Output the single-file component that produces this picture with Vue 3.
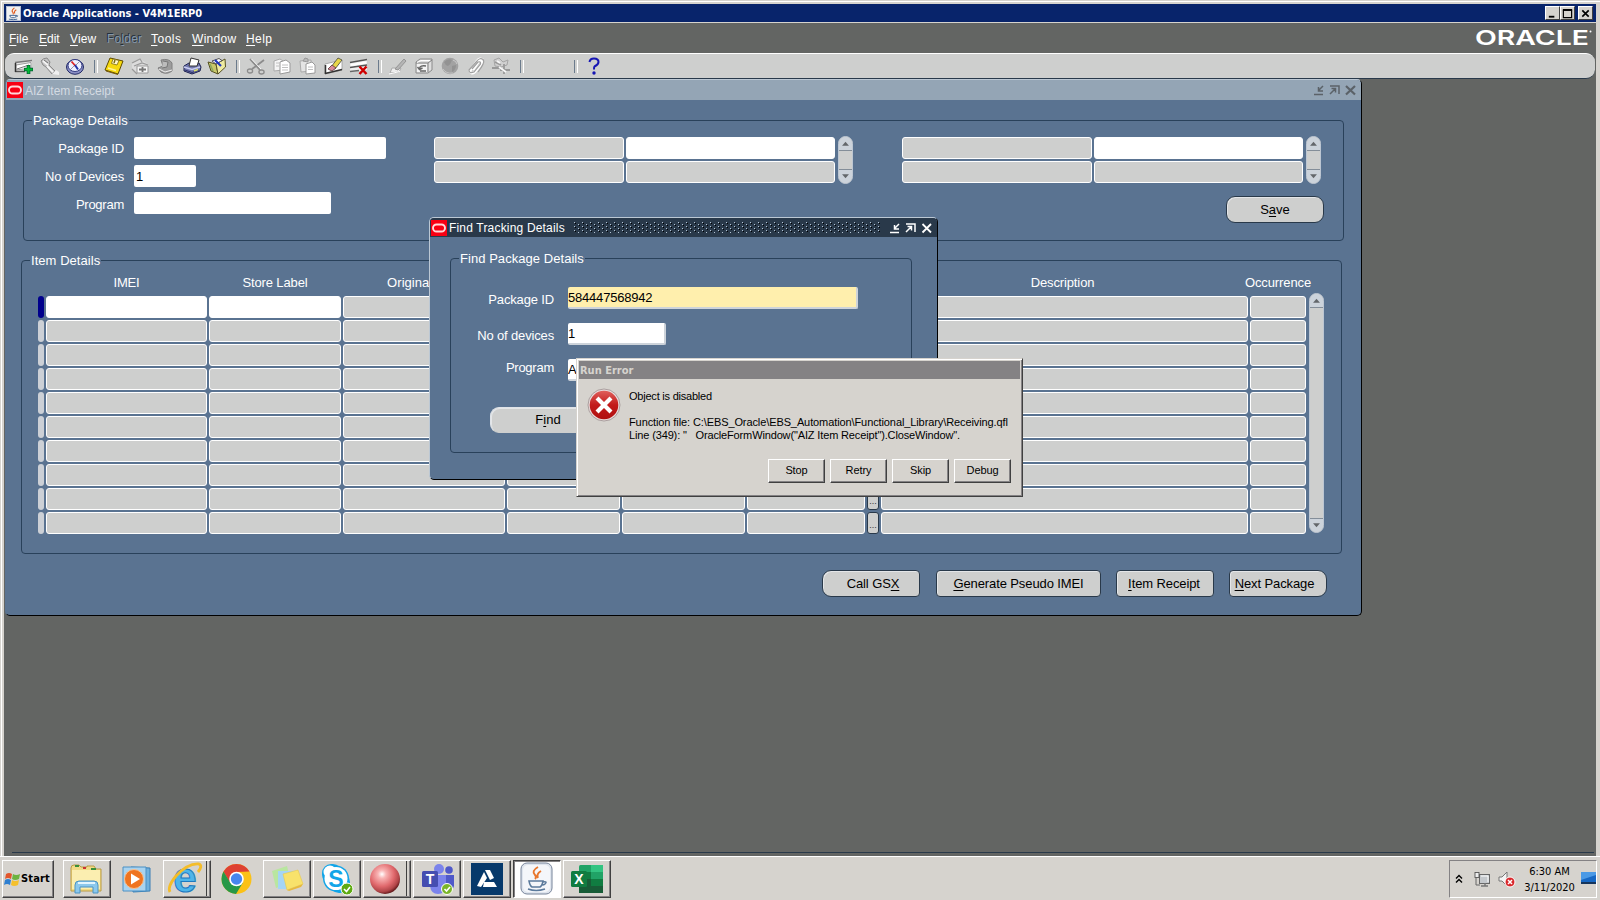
<script setup>
const menus = [
  { id: 'file', pre: '', key: 'F', post: 'ile' },
  { id: 'edit', pre: '', key: 'E', post: 'dit' },
  { id: 'view', pre: '', key: 'V', post: 'iew' },
  { id: 'folder', pre: 'Fo', key: 'l', post: 'der', off: true },
  { id: 'tools', pre: '', key: 'T', post: 'ools' },
  { id: 'window', pre: '', key: 'W', post: 'indow' },
  { id: 'help', pre: '', key: 'H', post: 'elp' }
]

const tools = [
  { id: 'new', svg: '<path d="M1 6 L18 3 V12 L1 14Z" fill="#e6e6e6"/><path d="M1 5.500L18 3.500" stroke="#777" stroke-width="1.600"/><path d="M2 8L17 5.500V11L2 13Z" fill="#fff" stroke="#888" stroke-width=".8"/><path d="M1 14.500H11" stroke="#555" stroke-width="1.400"/><path d="M1.500 6V15" stroke="#333" stroke-width="1.500"/><path d="M3 12L15 8" stroke="#777"/><path d="M14.500 8V17M10 12.500H19" stroke="#053" stroke-width="3.600"/><path d="M14.500 8.500V16.500M10.500 12.500H18.500" stroke="#0b3" stroke-width="2.200"/>' },
  { id: 'find', svg: '<path d="M1 4Q3 1 7 1L10 5L9 8L15 14L12 17L6 10L3 8Z" fill="#c4c4c4" stroke="#8a8a8a"/><path d="M3 4L8 8M7 9L13 15" stroke="#f4f4f4" stroke-width="1.800"/><path d="M4 3L8 6" stroke="#777"/><path d="M12 17L16 13L19 15V18Z" fill="#f0f0f0"/>' },
  { id: 'navigator', svg: '<ellipse cx="10" cy="10" rx="8.500" ry="7.300" fill="#8a8fc4" stroke="#222a66"/><ellipse cx="10" cy="8.500" rx="7" ry="6" fill="#eef0ff" stroke="#333b80"/><path d="M6.500 4.500L10.500 9" stroke="#d22" stroke-width="1.800"/><path d="M10 8L13 12.500" stroke="#2233aa" stroke-width="2"/><path d="M14 5L11 8M6 12L9 9" stroke="#99a" />' },
  { sep: true, id: 's1' },
  { id: 'save', svg: '<path d="M6 1L19 4L14 17L1 13Z" fill="#f6d90f" stroke="#5e4b00"/><path d="M9 2L15 3.500L13 8L7.500 6.500Z" fill="#fff9cc" stroke="#7c6a10" stroke-width=".8"/><path d="M11 3L10 6" stroke="#7c6a10" stroke-width="1.500"/><path d="M4 11L12 13.500" stroke="#fff29a" stroke-width="1.500"/><path d="M2 14L14 17.500" stroke="#7a5b00"/>' },
  { id: 'next', svg: '<path d="M2 6L10 2L18 7L17 15L7 17L2 12Z" fill="#dcdcdc"/><path d="M2 6L10 2L12 5M4 9L12 6L18 8M2 12L7 17" stroke="#999" stroke-width="1.200"/><path d="M7 9H18V16H7Z" fill="#f6f6f6" stroke="#999"/><path d="M9 12.500H16M12.500 10V15" stroke="#777" stroke-width="1.800"/>' },
  { id: 'switch', svg: '<path d="M5 3Q13 1 16 6V14Q11 18 5 15L2 11L7 9Z" fill="#9c9c9c" stroke="#808080"/><path d="M7 4L12 5L11 10L6 11" fill="#bcbcbc" stroke="#777"/><path d="M3 12L9 15L16 13" stroke="#efefef"/>' },
  { id: 'print', svg: '<path d="M2 9L7 6H17L19 10L18 14L10 17L2 14Z" fill="#7278ae" stroke="#1d2250"/><path d="M7 9L9 1L17 3L15 9Z" fill="#fff" stroke="#333"/><path d="M2 10L10 12.500L18 10" stroke="#c9cdf0" stroke-width="1.600"/><path d="M3 13L10 15.500L17 13" stroke="#2a2f6a"/><path d="M12 14L16 12.500" stroke="#dfe26a" stroke-width="1.500"/>' },
  { id: 'close', svg: '<path d="M1 5L9 7L11 17L4 14Z" fill="#c9c86a" stroke="#555022"/><path d="M9 7L18 2L18.500 10L11 17Z" fill="#eeeaa0" stroke="#555022"/><path d="M5 4L12 1.500L15 3.500L9 7Z" fill="#fff" stroke="#555"/><path d="M8 3L14 9" stroke="#2038c0" stroke-width="2.200"/><path d="M3 7L6 14" stroke="#8aa860" stroke-width="1.500"/>' },
  { sep: true, id: 's2' },
  { id: 'cut', svg: '<path d="M4 2L14 13M18 3L6 12" stroke="#8c8c8c" stroke-width="1.800"/><path d="M5.500 2L15 12" stroke="#f4f4f4"/><ellipse cx="4" cy="14" rx="2.600" ry="2" stroke="#8c8c8c" stroke-width="1.300"/><ellipse cx="15.500" cy="15" rx="2.600" ry="2" stroke="#8c8c8c" stroke-width="1.300"/>' },
  { id: 'copy', svg: '<path d="M2 4L8 2L11 4V13L2 14Z" fill="#f5f5f5" stroke="#aaa"/><path d="M8 5L14 3L18 6V15L8 17Z" fill="#fff" stroke="#999"/><path d="M10 8H16M10 10.500H16M10 13H16M4 6H7M4 9H7" stroke="#c0c0c0"/>' },
  { id: 'paste', svg: '<path d="M2 4L13 3V14L3 15Z" fill="#e4e4e4" stroke="#aaa"/><path d="M5 4L7 1L10 2V5Z" fill="#bbb" stroke="#999"/><path d="M8 7L14 5L17 8V16L8 17Z" fill="#fff" stroke="#999"/><path d="M10 10H15M10 12.500H15" stroke="#c0c0c0"/>' },
  { id: 'clear', svg: '<path d="M1 7L18 3V13L1 17Z" fill="#fff" stroke="#999" stroke-width=".8"/><path d="M1 16.500L18 12.500" stroke="#333" stroke-width="1.500"/><path d="M1.500 8V17" stroke="#333" stroke-width="1.500"/><path d="M7 10L14 1L18 3L11 12Z" fill="#e8d648" stroke="#554" stroke-width=".9"/><path d="M4 12L8 8L12 11L8 14Z" fill="#d98a9a" stroke="#644" stroke-width=".9"/>' },
  { id: 'delete', svg: '<path d="M1 5L18 2V13L1 15Z" fill="#eee"/><path d="M1 5.500L18 2.500M1 10.500L18 8" stroke="#555" stroke-width="1.700"/><path d="M2 8L17 5.500" stroke="#fff" stroke-width="2"/><path d="M1 14.500L10 13.500" stroke="#666" stroke-width="1.500"/><path d="M10.500 9.500L17.500 17M17.500 9.500L10.500 17" stroke="#d00000" stroke-width="2.500"/>' },
  { sep: true, id: 's3' },
  { id: 'edit', svg: '<path d="M2 16L4 11H13L11 15Z" fill="#eee" stroke="#aaa"/><path d="M7 12L16 2L18 4L10 13Z" fill="#b5b5b5" stroke="#959595"/><path d="M1 17L12 14.500" stroke="#fff"/>' },
  { id: 'zoom', svg: '<path d="M2 5L6 2H18V13L14 16H2Z" fill="#dedede" stroke="#8a8a8a"/><path d="M3 7H13V15H3Z" fill="#f3f3f3"/><path d="M2 6H14V15M14 6L18 3" stroke="#808080"/><path d="M3 5.500L7 3.500H16" stroke="#fff"/><path d="M12 9Q6 8 5.500 11.500M3.500 10L5.500 12.500L8.500 11M6 14H12" stroke="#666" stroke-width="1.400"/>' },
  { id: 'translate', svg: '<circle cx="10" cy="9" r="8.300" fill="#a2a2a2"/><path d="M4 5Q8 1 12 3Q11 7 8 9Q5 8 4 5ZM12 9L16 8Q16 13 12 15Z" fill="#929292"/><path d="M3 12Q6 17 13 16" stroke="#c4c4c4"/><path d="M13 3Q16 4 17 7" stroke="#ccc"/>' },
  { id: 'attach', svg: '<path d="M7 13L13 4Q16 3 16 6L9 15Q5 18 4 14L11 4Q14 0 17 3" stroke="#fff" stroke-width="2.600"/><path d="M6 12L12 5Q15 4 14.500 7L8 15Q3 17 3 13L11 4Q14 0 17.500 3Q19 6 12 15" stroke="#a0a0a0" stroke-width="1.200"/>' },
  { id: 'folder', svg: '<path d="M3 3L8 1L12 5L17 3L16 8L10 10L4 9Z" fill="#d0d0d0" stroke="#a5a5a5"/><path d="M1 11H10M13 7V17M9 13H19M4 5L10 8" stroke="#999" stroke-width="1.800"/><path d="M6 4L9 6M8 10L15 15" stroke="#f7f7f7" stroke-width="1.800"/>' },
  { sep: true, id: 's4' },
  { gap: true, id: 'g1' },
  { sep: true, id: 's5' },
  { id: 'help', svg: '<path d="M5.500 5Q6 1.500 10 1.500Q14.500 1.500 14.500 5Q14.500 7.500 10.500 9.500Q10 10 10 12.500" fill="none" stroke="#1616b4" stroke-width="2"/><circle cx="10" cy="16" r="1.700" fill="#1616b4"/>' }
]

const cols = ['imei', 'store', 'orig', 'c4', 'c5', 'c6', 'lov', 'desc', 'occ']
const heads = { imei: 'IMEI', store: 'Store Label', orig: 'Original IMEI', desc: 'Description', occ: 'Occurrence' }

const tasks = [
  { id: 'explorer', box: true, svg: '<path d="M4 7Q4 4 7 4H12L14 6H20V5H27L29 8H34V30H4Z" fill="#f2db86" stroke="#b99b45"/><path d="M5 9H33V28H5Z" fill="#fbeeb0"/><path d="M8 5H12M24 8H29" stroke="#3a8f3a" stroke-width="2"/><path d="M16 7H19" stroke="#c33" stroke-width="2"/><path d="M8 32V24Q8 20 12 20H27Q31 20 31 24V32H26V26H13V32Z" fill="#8cc8ec" stroke="#4a93c4"/><path d="M11 22H28" stroke="#e2f5ff" stroke-width="2"/>' },
  { id: 'media', svg: '<path d="M14 6L33 7V30L16 31Z" fill="#6fb0dd" stroke="#3b7fb4"/><path d="M6 6H29V30H6Z" fill="#a9d3ef" stroke="#4b90c4"/><circle cx="17" cy="18" r="9.500" fill="#ef7420" stroke="#f9c08f"/><path d="M14 12.500L23 18L14 23.500Z" fill="#fff"/>' },
  { id: 'ie', box: true, stack: true, svg: '<text x="19" y="31" text-anchor="middle" font-family="Liberation Sans, sans-serif" font-weight="700" font-size="42" fill="#4db5ea" stroke="#1d79c0" stroke-width="1">e</text><path d="M4 31Q1 26 10 15Q22 2 33 3Q37 5 32 11" fill="none" stroke="#f4bd2a" stroke-width="2.800"/>' },
  { id: 'chrome', svg: '<circle cx="19.500" cy="18" r="15" fill="#fbc116"/><path d="M6.500 10.500A15 15 0 0 1 32.500 10.500L19.500 11L13 22Z" fill="#de4132"/><path d="M6.500 10.500A15 15 0 0 0 19 33L26 21.500L13.300 21.700Z" fill="#279847"/><circle cx="19.500" cy="18" r="7.300" fill="#fff"/><circle cx="19.500" cy="18" r="5.700" fill="#4786ee"/>' },
  { id: 'notes', box: true, svg: '<path d="M5 10L20 5L24 22L9 27Z" fill="#b9e6a0"/><path d="M11 10H27V28H11Z" fill="#a5d5f5"/><path d="M16 13L31 9L36 23L20 29Z" fill="#f8e26b" stroke="#e8c94c" stroke-width=".6"/><path d="M20 29L36 23L34 26L22 30Z" fill="#e8b93c"/>' },
  { id: 'skype', box: true, svg: '<rect x="5" y="3" width="20" height="20" rx="9" fill="#12a5e8"/><rect x="12" y="11" width="21" height="21" rx="10" fill="#12a5e8"/><circle cx="19" cy="17.500" r="13" fill="#12a5e8"/><circle cx="19" cy="17.500" r="11.500" fill="#fff"/><circle cx="13" cy="11" r="6.500" fill="#fff"/><text x="19" y="26" text-anchor="middle" font-family="Liberation Sans, sans-serif" font-weight="700" font-size="23" fill="#12a5e8">S</text><circle cx="30" cy="28" r="6" fill="#5fab12" stroke="#fff"/><path d="M27 28L29.500 30.500L33 26" fill="none" stroke="#fff" stroke-width="1.600"/>' },
  { id: 'ball', box: true, stack: true, svg: '<defs><radialGradient id="ballfill" cx=".4" cy=".34" r=".68"><stop offset="0" stop-color="#fff"/><stop offset=".2" stop-color="#f9b4b4"/><stop offset=".6" stop-color="#e0686c"/><stop offset=".85" stop-color="#b04548"/><stop offset="1" stop-color="#5d1517"/></radialGradient></defs><circle cx="19" cy="18" r="15" fill="url(#ballfill)"/>' },
  { id: 'teams', box: true, svg: '<circle cx="22" cy="8" r="5" fill="#7b83eb"/><circle cx="32" cy="9" r="3.800" fill="#5059c9"/><path d="M27 14H37V25Q36 30 30 30H27Z" fill="#5059c9"/><path d="M13 14H29V25Q28 33 21 33Q14 33 13 25Z" fill="#7b83eb"/><rect x="5" y="10" width="16" height="16" rx="1.500" fill="#454eb0"/><text x="13" y="23" text-anchor="middle" font-family="Liberation Sans, sans-serif" font-weight="700" font-size="14" fill="#fff">T</text><circle cx="30" cy="28" r="5.500" fill="#7ab52a" stroke="#fff"/><path d="M27.500 28L29.500 30L33 26" fill="none" stroke="#fff" stroke-width="1.600"/>' },
  { id: 'drive', box: true, svg: '<rect x="4" y="2" width="32" height="32" fill="#06396b"/><path d="M18 9H23L27 17L23 19Z" fill="#fff"/><path d="M17 11L20 17L14 26L10 25Z" fill="#fff"/><path d="M17 21H27L30 26H16Z" fill="#fff"/>' },
  { id: 'java', box: true, active: true, svg: '<rect x="4" y="2" width="31" height="31" rx="6" fill="#dfe5ee" stroke="#77849a"/><rect x="6" y="4" width="27" height="27" rx="5" fill="#f4f6fa"/><path d="M21 6Q14 10 18 14Q20 16 18 18M24 10Q19 13 21 17" fill="none" stroke="#e8762c" stroke-width="1.900"/><path d="M12 20H26Q25 25 23 26H15Q13 25 12 20ZM26 21Q31 20 28 23Q27 24 25 24M11 28Q19 31 28 28" fill="none" stroke="#5b7a9c" stroke-width="1.500"/>' },
  { id: 'excel', box: true, svg: '<rect x="12" y="4" width="24" height="28" rx="1.500" fill="#21a366"/><path d="M24 4H36V11H24Z" fill="#33c481"/><path d="M12 11H24V18H12Z" fill="#107c41"/><path d="M24 18H36V25H24Z" fill="#107c41"/><path d="M12 18H24V32H12ZM12 25H36V32H12Z" fill="#185c37"/><rect x="4" y="10" width="16" height="16" rx="1.500" fill="#107c41"/><text x="12" y="23" text-anchor="middle" font-family="Liberation Sans, sans-serif" font-weight="700" font-size="14" fill="#fff">X</text>' }
]
</script>

<template>
  <div class="screen">
    <header class="titlebar">
      <svg class="java" viewBox="0 0 16 16"><rect x=".5" y=".5" width="15" height="15" fill="#f1f1f1" stroke="#b9c3d6" /><path d="M9 2Q5 5 7.500 7Q8 8 7.500 9M11 4Q8 6 9.500 8" fill="none" stroke="#e05a1c" stroke-width="1.200" /><path d="M4 10H11Q11 12 9 12.500H6Q4 12 4 10ZM11 10Q14 10 11 12M3 14Q8 15.200 12 14" fill="none" stroke="#3d6290" /></svg>
      <span class="app-name">Oracle Applications - V4M1ERP0</span>
      <div class="controls">
        <button><svg viewBox="0 0 14 12"><path d="M3 9.500H9" stroke="#000" stroke-width="2" /></svg></button>
        <button><svg viewBox="0 0 14 12"><path d="M2.500 2V10.500H11.500V2M2 2H12" fill="none" stroke="#000" stroke-width="1.300" /><path d="M2 2.200H12" stroke="#000" stroke-width="2" /></svg></button>
        <button class="x"><svg viewBox="0 0 14 12"><path d="M3.500 2.500L10.500 9.500M10.500 2.500L3.500 9.500" stroke="#000" stroke-width="1.800" /></svg></button>
      </div>
    </header>

    <nav class="menubar">
      <span v-for="m in menus" :key="m.id" class="menu" :class="[m.id, { off: m.off }]">{{ m.pre }}<u>{{ m.key }}</u>{{ m.post }}</span>
      <svg class="brand" width="118" height="26" viewBox="0 0 118 26"><text x="0" y="20" textLength="114" lengthAdjust="spacingAndGlyphs" font-family="Inter, sans-serif" font-weight="600" font-size="20.500" fill="#fff">ORACLE</text><circle cx="115.500" cy="6.500" r="1" fill="#fff" /></svg>
    </nav>

    <div class="toolbar">
      <template v-for="t in tools" :key="t.id">
        <i v-if="t.sep" class="sep"></i>
        <i v-else-if="t.gap" class="tgap"></i>
        <span v-else class="tool"><svg width="20" height="18" viewBox="0 0 20 18" fill="none" v-html="t.svg"></svg></span>
      </template>
    </div>

    <section class="win main">
      <div class="wtitle">
        <svg class="o" viewBox="0 0 16 16"><rect width="16" height="16" fill="#f80012" /><rect x="2" y="4.500" width="12" height="7" rx="3.500" fill="none" stroke="#ffd9d9" stroke-width="1.900" /></svg>
        <span class="cap">AIZ Item Receipt</span>
        <svg class="wctl" width="46" height="14" viewBox="0 0 46 14" fill="none" stroke="#5b6268" stroke-width="1.500"><path d="M1 11.500H10M10 3L6 7M5.500 4V8H10" /><path d="M17 3H26V11M17 11L22 6M18.500 5.500H22.500V9.500" /><path d="M33 3L42 11.500M42 3L33 11.500" stroke-width="2.200" /></svg>
      </div>

      <fieldset class="package">
        <legend><span>Package Details</span></legend>
        <div class="pk-row">
          <div class="pk-form">
            <label>Package ID</label><div class="inp w-id"></div>
            <label>No of Devices</label><div class="inp w-no">1</div>
            <label class="pr">Program</label><div class="inp w-pr"></div>
          </div>
          <div v-for="n in 2" :key="n" class="pk-block">
            <div class="pairs"><b></b><b class="on"></b><b></b><b></b></div>
            <div class="scroll small">
              <svg viewBox="0 0 15 14"><path d="M3.500 9.500H11.500L7.500 5Z" fill="#63676b" /></svg>
              <svg viewBox="0 0 15 14"><path d="M3.500 4.500H11.500L7.500 9Z" fill="#63676b" /></svg>
            </div>
          </div>
        </div>
        <button class="btn save">S<u>a</u>ve</button>
      </fieldset>

      <fieldset class="items">
        <legend><span>Item Details</span></legend>
        <div class="grid heads">
          <span></span>
          <span v-for="k in cols" :key="k" :class="k">{{ heads[k] }}</span>
        </div>
        <div class="body">
          <div class="rows">
            <div v-for="r in 10" :key="r" class="grid row">
              <i class="mark" :class="{ cur: r === 1 }"></i>
              <div v-for="k in cols" :key="k" :class="['cell', k, { on: r === 1 && (k === 'imei' || k === 'store') }]">{{ k === 'lov' && r > 8 ? '...' : '' }}</div>
            </div>
          </div>
          <div class="scroll tall">
            <svg viewBox="0 0 15 14"><path d="M3.500 9.500H11.500L7.500 5Z" fill="#63676b" /></svg>
            <svg viewBox="0 0 15 14"><path d="M3.500 4.500H11.500L7.500 9Z" fill="#63676b" /></svg>
          </div>
        </div>
      </fieldset>

      <div class="actions">
        <button class="btn gsx">Call GS<u>X</u></button>
        <button class="btn gen"><u>G</u>enerate Pseudo IMEI</button>
        <button class="btn rec"><u>I</u>tem Receipt</button>
        <button class="btn nxt"><u>N</u>ext Package</button>
      </div>
    </section>

    <section class="win find">
      <div class="wtitle dark">
        <svg class="o" viewBox="0 0 16 16"><rect width="16" height="16" fill="#f80012" /><rect x="2" y="4.500" width="12" height="7" rx="3.500" fill="none" stroke="#ffd9d9" stroke-width="1.900" /></svg>
        <span>Find Tracking Details</span>
        <svg class="hatch" width="308" height="11"><defs><pattern id="hatch" width="8" height="4" patternUnits="userSpaceOnUse"><rect width="1" height="1" fill="#b4c4d4" /><rect x="1" y="1" width="1" height="1" fill="#000" /><rect x="4" y="2" width="1" height="1" fill="#b4c4d4" /><rect x="5" y="3" width="1" height="1" fill="#000" /></pattern></defs><rect width="308" height="11" fill="url(#hatch)" /></svg>
        <svg class="wctl" width="46" height="14" viewBox="0 0 46 14" fill="none" stroke="#fff" stroke-width="1.500"><path d="M1 11.500H10M10 3L6 7M5.500 4V8H10" /><path d="M17 3H26V11M17 11L22 6M18.500 5.500H22.500V9.500" /><path d="M33.500 3L42 11.500M42 3L33.500 11.500" stroke-width="1.800" /></svg>
      </div>
      <fieldset class="findset">
        <legend><span>Find Package Details</span></legend>
        <div class="find-form">
          <label>Package ID</label><div class="inp f-id">584447568942</div>
          <label>No of devices</label><div class="inp f-no">1</div>
          <label class="pr">Program</label><div class="inp f-pr">A</div>
        </div>
        <button class="btn findbtn">F<u>i</u>nd</button>
      </fieldset>
    </section>

    <section class="dialog">
      <div class="dtitle">Run Error</div>
      <div class="dbody">
        <svg class="err" width="34" height="34" viewBox="0 0 34 34"><defs><linearGradient id="red" x1="0" y1="0" x2="0" y2="1"><stop offset="0" stop-color="#e0605c" /><stop offset=".5" stop-color="#c21a1a" /><stop offset="1" stop-color="#b01010" /></linearGradient></defs><circle cx="17" cy="17" r="16" fill="#e8dcdc" stroke="#9c8f8f" stroke-width=".8" /><circle cx="17" cy="17" r="14.300" fill="url(#red)" /><path d="M11.500 11.500L22.500 22.500M22.500 11.500L11.500 22.500" stroke="#fff" stroke-width="4.200" stroke-linecap="square" /></svg>
        <div class="dtext">
          <p class="l1">Object is disabled</p>
          <p class="l2">Function file: C:\EBS_Oracle\EBS_Automation\Functional_Library\Receiving.qfl</p>
          <p class="l3">Line (349): "&nbsp;&nbsp; OracleFormWindow("AIZ Item Receipt").CloseWindow".</p>
        </div>
      </div>
      <div class="dbtns">
        <button>Stop</button><button>Retry</button><button>Skip</button><button>Debug</button>
      </div>
    </section>

    <div class="spacer"></div>
    <div class="statusline"></div>
    <footer class="taskbar">
      <button class="start"><svg width="17" height="17" viewBox="0 0 17 17"><path d="M2 3Q5 1 8 3L7 8Q4 6 1 8Z" fill="#e2552b" /><path d="M9 3Q12 5 16 3L15 8Q11 10 8 8Z" fill="#6cb33f" /><path d="M1 9Q4 7 7 9L6 14Q3 12 0 14Z" fill="#2f7fd0" /><path d="M8 9Q11 11 15 9L14 14Q10 16 7 14Z" fill="#f5c02c" /></svg>Start</button>
      <div class="tasks">
        <div v-for="t in tasks" :key="t.id" class="task" :class="{ box: t.box, stack: t.stack, active: t.active }"><svg width="40" height="36" viewBox="0 0 40 36" v-html="t.svg"></svg></div>
      </div>
      <div class="tray">
        <svg width="8" height="10" viewBox="0 0 8 10" fill="none" stroke="#000" stroke-width="1.400"><path d="M1 4.500L4 1.500L7 4.500M1 8.500L4 5.500L7 8.500" /></svg>
        <svg class="net" width="18" height="17" viewBox="0 0 18 17"><rect x="5.500" y="3.500" width="10" height="9" fill="#c4c8cc" stroke="#666" /><path d="M7 15H14M11 12V15" stroke="#777" stroke-width="1.500" /><path d="M2 5.500V14H6" stroke="#666" fill="none" /><rect x="1" y="1.500" width="4" height="5" fill="#eee" stroke="#555" stroke-width=".9" /><path d="M7 5H14V11" stroke="#fff" fill="none" /></svg>
        <svg class="vol" width="18" height="17" viewBox="0 0 18 17"><path d="M1 6H4L9 1V15L4 10H1Z" fill="#f4f4f4" stroke="#777" /><circle cx="12" cy="11" r="5" fill="#d9282c" stroke="#fff" /><path d="M10 9L14 13M14 9L10 13" stroke="#fff" stroke-width="1.500" /></svg>
        <div class="clock"><span>6:30 AM</span><span>3/11/2020</span></div>
        <svg class="desk" width="15" height="14" viewBox="0 0 15 14"><rect width="15" height="11" fill="#1768c4" /><path d="M0 0H15V3L0 8Z" fill="#4b9ae6" /><rect x="0" y="10" width="15" height="2" fill="#16355c" /></svg>
      </div>
    </footer>
  </div>
</template>

<style>
html, body { margin: 0; overflow: hidden; }
</style>

<style scoped>
* { box-sizing: border-box; }
.screen {
  position: relative; width: 1600px; height: 900px; display: flex; flex-direction: column;
  background: #636563; padding: 4px 4px 0; overflow: hidden;
  box-shadow: inset 1px 1px 0 #d6d3ce, inset 2px 2px 0 #fff, inset 4px 4px 0 #d6d3ce, inset -4px 0 0 #d6d3ce;
  font: 13px/16px "Liberation Sans", Arial, sans-serif; color: #fff;
}
svg { display: block; flex: none; overflow: visible; }
button { font: inherit; color: #000; margin: 0; padding: 0; letter-spacing: inherit; }
u { text-decoration: underline; text-underline-offset: 2px; text-decoration-thickness: 1px; text-decoration-skip-ink: none; }

.titlebar { height: 19px; flex: none; background: #08246b; border-bottom: 1px solid #d6d3ce; display: flex; align-items: center; padding: 0 3px 0 2px; }
.java { width: 15px; height: 15px; }
.app-name { font: bold 11px/16px "DejaVu Sans Condensed", "DejaVu Sans", sans-serif; margin-left: 2px; padding-top: 1px; }
.controls { margin-left: auto; display: flex; }
.controls button { width: 15px; height: 14px; background: #d6d3ce; border: 1px solid; border-color: #fff #404040 #404040 #fff; }
.controls .x { margin-left: 3px; }
.controls svg { width: 13px; height: 11px; }

.menubar { height: 30px; flex: none; display: flex; align-items: center; padding-left: 5px; font-size: 12px; }
.menu { flex: none; padding-top: 2px; }
.file { width: 30px; }
.edit { width: 31px; }
.view { width: 37px; letter-spacing: .1px; }
.folder { width: 44px; letter-spacing: .2px; }
.tools { width: 41px; letter-spacing: .5px; }
.window { width: 54px; letter-spacing: .3px; }
.help { letter-spacing: .4px; }
.off { color: #8597ab; text-shadow: -1px -1px 0 #22303d; }
.brand { margin-left: auto; margin-right: 3px; }

.toolbar { height: 26px; flex: none; margin: 0 1px 0 1px; background: #cecfce; border-radius: 9px; border-top: 1px solid #fff; border-bottom: 1px solid #29394a; display: flex; align-items: center; padding-left: 6px; }
.tool { width: 25.800px; display: flex; justify-content: center; }
.sep { width: 13px; height: 13px; display: block; }
.sep::before { content: ""; display: block; width: 2px; height: 13px; margin-left: 6px; border-left: 1px solid #6b7b8c; border-right: 1px solid #fff; }
.tgap { width: 41px; }

.win { position: absolute; background: #5a7391; border: 1px solid #000; border-left-color: #bcc8d4; border-top-color: #bcc8d4; border-radius: 5px; }
.main { left: 5px; top: 79px; width: 1357px; height: 537px; border-left-color: #5a7391; }
.wtitle { height: 20px; display: flex; align-items: center; background: #94a5b5; color: #d3dae2; font-size: 12px; border-radius: 4px 4px 0 0; }
.wtitle .cap { padding-top: 2px; }
.wtitle .o { width: 16px; height: 16px; margin: 0 2px 0 1px; }
.wtitle.dark { height: 19px; background: #29394a; color: #fff; letter-spacing: .18px; }
.wctl { margin-left: auto; margin-right: 2px; }
.hatch { margin-left: 9px; }

fieldset { border: 1px solid #29415a; border-radius: 4px; padding: 0; min-width: 0; }
legend { padding: 0 1px; margin-left: 8px; height: 16px; letter-spacing: .05px; }
legend span { display: block; padding-top: 1px; }
.package { margin: 12px 0 0 17px; width: 1321px; height: 129px; }
.pk-row { display: flex; padding-top: 9px; height: 57px; }
.pk-form { width: 410px; flex: none; display: grid; grid-template-columns: 100px auto; grid-template-rows: 22px 22px 22px; row-gap: 5.500px; column-gap: 10px; align-content: start; }
label { text-align: right; line-height: 24px; letter-spacing: -.15px; white-space: nowrap; }
.pk-form .pr { line-height: 26px; }
.pr { letter-spacing: -.25px; }
.inp { background: #fff; border-radius: 2px; color: #000; line-height: 23px; padding-left: 2px; height: 22px; }
.w-id { width: 252px; }
.w-no { width: 62px; }
.w-pr { width: 197px; }
.pk-block { display: flex; width: 468px; flex: none; }
.pk-block:last-child { width: 430px; }
.pairs { display: grid; grid-template-columns: 190px 209px; grid-template-rows: 22px 22px; gap: 2px; align-content: start; }
.pairs b, .cell { background: #cecfce; border: 1px solid #fff; border-radius: 3px; }
.pairs .on, .cell.on { background: #fff; }
.scroll { width: 15px; background: #cecfce; border: 1px solid #bcc6d2; border-radius: 8px; display: flex; flex-direction: column; justify-content: space-between; margin-left: 3px; overflow: hidden; }
.scroll svg { width: 13px; height: 14px; background: #ccd3db; }
.scroll svg:first-child { border-bottom: 1px solid #848e99; }
.scroll svg:last-child { border-top: 1px solid #848e99; }
.small { height: 48px; margin-top: -1px; }
.btn { display: block; height: 27px; background: #cecfce; border: 1px solid #29394a; border-radius: 4px; line-height: 24px; text-align: center; box-shadow: inset 1px 1px 0 #e4e6e8; }
.save { width: 98px; margin: 11px 0 0 1202px; border-radius: 9px; height: 27px; }

.items { margin: 11px 0 0 15px; width: 1321px; height: 302px; }
.grid { display: grid; grid-template-columns: 6px 161px 132px 162px 113px 123px 118px 12px 367px 56px; column-gap: 2px; }
.items .grid { margin-left: 16px; }
.heads { height: 28px; text-align: center; line-height: 29px; white-space: nowrap; letter-spacing: -.12px; }
.heads .occ { margin: 0 -10px; }
.heads .imei { letter-spacing: -.2px; }
.heads .desc { padding-right: 4px; }
.heads .orig { padding-left: 2px; letter-spacing: .05px; }
.body { display: flex; }
.body .row { grid-template-rows: 22px; height: 22px; margin-bottom: 2px; }
.mark { background: #ccd0d6; border-radius: 3px; }
.mark.cur { background: #00008c; }
.cell.lov { border-color: #29394a; color: #333; font-size: 9px; line-height: 20px; text-align: center; height: 22px; padding-top: 2px; }
.tall { height: 240px; margin-top: -3px; }

.actions { display: flex; margin: 16px 0 0 816px; }
.actions .btn { letter-spacing: -.1px; }
.gsx { width: 98px; border-radius: 9px 4px 4px 9px; margin-right: 16px; padding-left: 4px; }
.gen { width: 165px; margin-right: 15px; }
.rec { width: 98px; margin-right: 15px; padding-right: 2px; }
.nxt { width: 98px; border-radius: 4px 9px 9px 4px; padding-right: 7px; }

.find { left: 429px; top: 217px; width: 509px; height: 263px; }
.findset { margin: 13px 0 0 20px; width: 462px; height: 203px; }
.find-form { display: grid; grid-template-columns: 103px auto; grid-template-rows: 36px 36px 48px; column-gap: 14px; padding-top: 21px; }
.find-form label { line-height: 26px; }
.find-form .pr { line-height: 18px; }
.find-form .inp { border: solid #cdd3da; border-width: 0 2px 2px 0; line-height: 21px; padding-left: 0; letter-spacing: -.2px; }
.find-form .f-id { width: 290px; background: #ffefad; }
.find-form .f-no { width: 98px; }
.find-form .f-pr { width: 200px; }
.findbtn { width: 140px; margin-left: 39px; border-radius: 9px; height: 26px; border-color: #dfe3e8 #29394a #cecfce #dfe3e8; padding-right: 24px; }

.dialog { position: absolute; left: 576px; top: 358px; width: 447px; height: 139px; background: #d6d3ce; border: 1px solid; border-color: #d6d3ce #404040 #404040 #d6d3ce; box-shadow: inset 1px 1px 0 #fff, inset -1px -1px 0 #848284; color: #000; padding: 2px; font-size: 11px; }
.dtitle { height: 18px; background: #848284; color: #d6d3ce; font: bold 11px/20px "DejaVu Sans Condensed", "DejaVu Sans", sans-serif; padding-left: 1px; }
.dbody { display: flex; padding: 9px 0 0 8px; height: 80px; }
.dtext { margin-left: 8px; line-height: 13px; white-space: nowrap; padding-top: 2px; }
p { margin: 0; }
.l1 { letter-spacing: -.22px; margin-bottom: 13px; }
.l2 { letter-spacing: -.1px; }
.l3 { letter-spacing: -.14px; }
.dbtns { display: flex; gap: 5px; justify-content: flex-end; padding-right: 9px; }
.dbtns button { width: 57px; height: 24px; background: #d6d3ce; border: 1px solid; border-color: #fff #404040 #404040 #fff; box-shadow: inset -1px -1px 0 #848284; line-height: 19px; padding-bottom: 2px; letter-spacing: -.1px; }

.spacer { flex: 1; }
.statusline { height: 4px; flex: none; border-top: 1px solid #29394a; margin: 0 2px 0 8px; }
.taskbar { flex: none; height: 44px; margin: 0 -4px; background: #d6d3ce; border-top: 1px solid #fff; display: flex; padding: 3px 3px 2px 2px; color: #000; }
.taskbar button, .task.box { border: 1px solid; border-color: #fff #404040 #404040 #fff; box-shadow: inset -1px -1px 0 #848284; background: #d6d3ce; }
.taskbar .start { width: 52px; height: 38px; display: flex; align-items: center; font: bold 11px/16px "DejaVu Sans Condensed", "DejaVu Sans", sans-serif; padding: 0 0 0 1px; letter-spacing: .15px; }
.tasks { display: flex; gap: 2px; margin-left: 9px; }
.task { width: 48px; height: 38px; display: flex; align-items: center; justify-content: center; }
.task.stack { box-shadow: inset -1px -1px 0 #848284, inset -3px 0 0 #d6d3ce, inset -4px 0 0 #404040; padding-right: 3px; }
.task.active { background: #fff; border-color: #404040 #fff #fff #404040; box-shadow: inset 1px 1px 0 #848284; }
.tray { margin-left: auto; width: 148px; height: 38px; border: 1px solid; border-color: #848284 #fff #fff #848284; display: flex; align-items: center; padding-left: 5px; font: 11px/16px "DejaVu Sans Condensed", "DejaVu Sans", sans-serif; }
.net { margin-left: 11px; }
.vol { margin-left: 6px; }
.clock { display: flex; flex-direction: column; align-items: center; width: 62px; margin-left: 5px; padding-top: 1px; letter-spacing: -.05px; }
.desk { margin-left: 3px; }
</style>
